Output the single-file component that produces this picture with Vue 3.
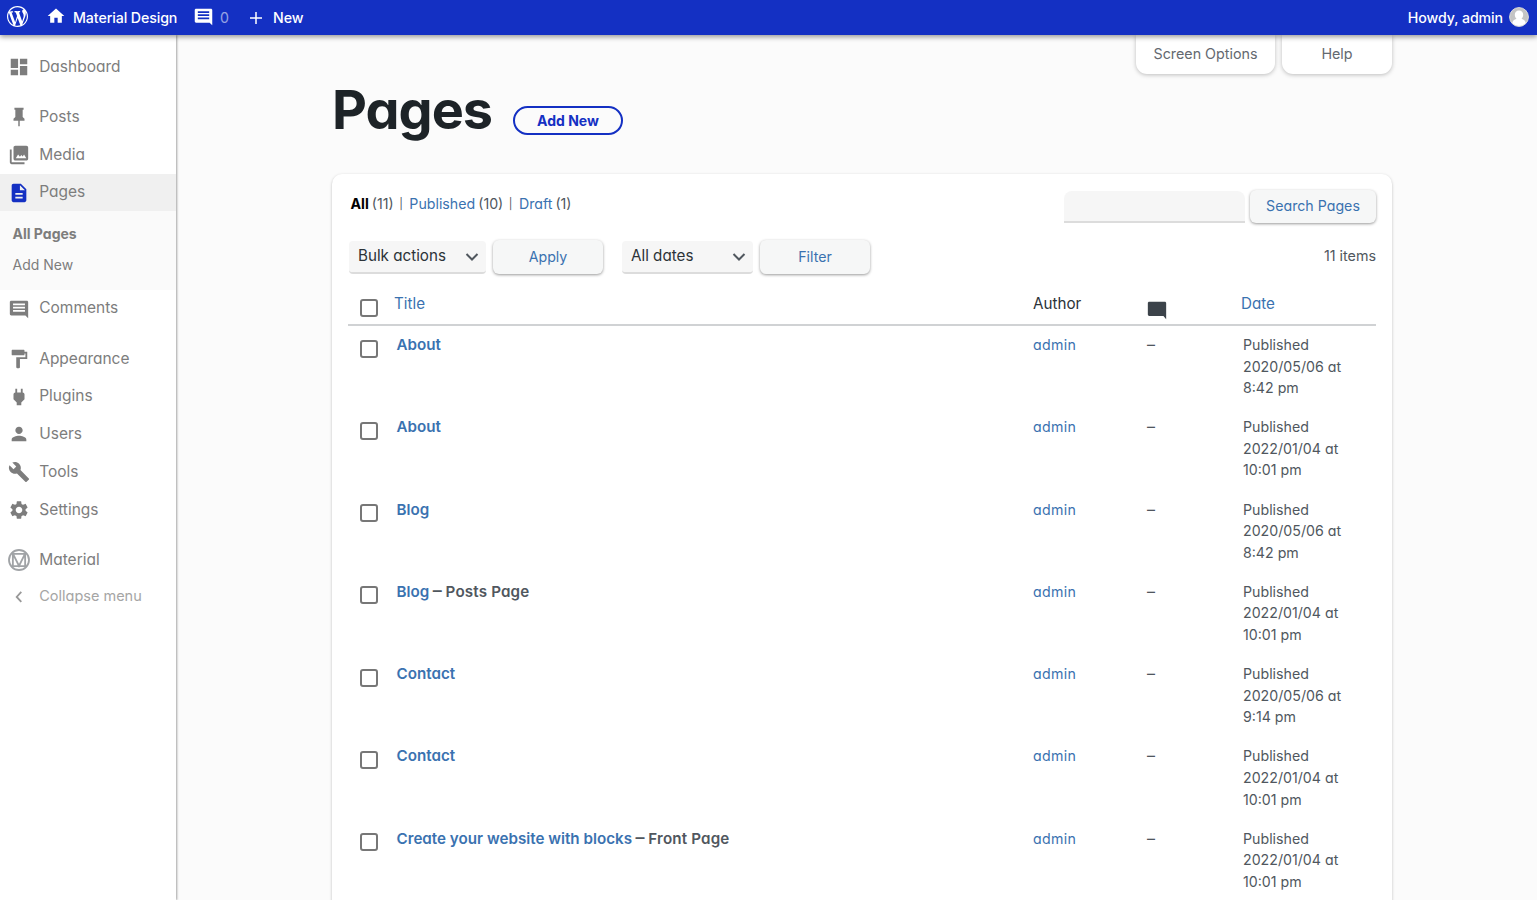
<template>
  <div class="admin">
    <header class="bar">
      <svg class="wp-logo" viewBox="0 0 20 20"><path :d="icons.wordpress" /></svg>
      <svg class="bar-home" viewBox="0 0 24 24"><path :d="icons.home" /></svg>
      <span class="bar-site">Material Design</span>
      <svg class="bar-comment" viewBox="0 0 24 24"><path :d="icons.comment" /></svg>
      <span class="bar-count">0</span>
      <svg class="bar-plus" viewBox="0 0 12 12"><path d="M6 0v12M0 6h12" /></svg>
      <span class="bar-new">New</span>
      <span class="howdy">Howdy, admin</span>
      <svg class="avatar" viewBox="0 0 20 20">
        <circle cx="10" cy="10" r="9.5" fill="#c4c4c4" />
        <path d="M10 3.6c2.6 0 4.2 1.8 4.2 4.2 0 1.700-.7 3-1.700 3.900 2.300.7 3.900 2.100 4.400 4.500A9.300 9.300 0 0 1 3.100 16.200c.5-2.400 2.100-3.800 4.400-4.500C6.500 10.800 5.800 9.500 5.800 7.800 5.800 5.400 7.400 3.600 10 3.600z" fill="#fff" />
        <circle cx="10" cy="10" r="9.400" fill="none" stroke="#d9d9d9" />
      </svg>
    </header>

    <div class="body">
      <nav class="menu">
        <template v-for="item in menu" :key="item.label">
          <div class="menu-item" :class="{ current: item.current, spaced: item.spaced }">
            <svg viewBox="0 0 24 24"><path :d="icons[item.icon]" /></svg>
            <span>{{ item.label }}</span>
          </div>
          <div v-if="item.current" class="submenu">
            <span class="active">All Pages</span>
            <span>Add New</span>
          </div>
        </template>
        <div class="menu-item spaced">
          <svg class="material" viewBox="0 0 24 24">
            <circle cx="12" cy="12" r="10.900" />
            <path d="M5.300 5.300h13.400v13.400H5.300zM5.600 5.600l6.400 12.800 6.400-12.800" />
          </svg>
          <span>Material</span>
        </div>
        <div class="menu-item collapse">
          <svg class="chevron" viewBox="0 0 24 24"><path d="M14.500 7.500L9.500 13l5 5.500" /></svg>
          <span>Collapse menu</span>
        </div>
      </nav>

      <main class="content">
        <div class="meta-links">
          <button class="screen-options">Screen Options</button>
          <button class="help">Help</button>
        </div>

        <div class="heading">
          <h1>Pages</h1>
          <a class="add-new">Add New</a>
        </div>

        <section class="card">
          <div class="top-row">
            <div class="views">
              <b>All</b> (11)<i>|</i><a>Published</a> (10)<i>|</i><a>Draft</a> (1)
            </div>
            <div class="search">
              <input type="text">
              <button class="btn">Search Pages</button>
            </div>
          </div>

          <div class="actions">
            <div class="select bulk">
              <span>Bulk actions</span>
              <svg viewBox="0 0 14 10"><path d="M1.500 2l5.500 5.500L12.500 2" /></svg>
            </div>
            <button class="btn wide">Apply</button>
            <div class="select dates">
              <span>All dates</span>
              <svg viewBox="0 0 14 10"><path d="M1.500 2l5.500 5.500L12.500 2" /></svg>
            </div>
            <button class="btn wide">Filter</button>
            <span class="total">11 items</span>
          </div>

          <div class="table-head">
            <span class="check"></span>
            <a class="title">Title</a>
            <span>Author</span>
            <svg viewBox="0 0 24 24"><path :d="icons.bubble" /></svg>
            <a>Date</a>
          </div>
          <div v-for="(page, i) in pages" :key="i" class="table-row">
            <span class="check"></span>
            <strong><a>{{ page.title }}</a><template v-if="page.state"><span class="dash">–</span> <span class="state">{{ page.state }}</span></template></strong>
            <a class="author">admin</a>
            <span class="dash">–</span>
            <div class="date">Published<br>{{ page.date }} at<br>{{ page.time }}</div>
          </div>
        </section>
      </main>
    </div>
  </div>
</template>

<script setup>
const icons = {
  wordpress: 'M20 10c0-5.510-4.490-10-10-10C4.480 0 0 4.490 0 10c0 5.520 4.480 10 10 10 5.510 0 10-4.480 10-10zM7.780 15.370L4.370 6.220c.55-.02 1.170-.08 1.170-.08.5-.06.44-1.130-.06-1.110 0 0-1.450.11-2.370.11-.18 0-.37 0-.58-.01C4.120 2.690 6.870 1.110 10 1.110c2.330 0 4.450.87 6.050 2.340-.68-.11-1.650.39-1.650 1.580 0 .74.45 1.360.9 2.100.35.61.55 1.360.55 2.460 0 1.490-1.400 5-1.400 5l-3.030-8.370c.54-.02.82-.17.82-.17.5-.05.44-1.250-.06-1.220 0 0-1.440.12-2.380.12-.87 0-2.330-.12-2.330-.12-.5-.03-.56 1.200-.06 1.220l.92.08 1.260 3.410zM17.410 10c.24-.64.74-1.870.43-4.250.7 1.290 1.050 2.710 1.050 4.250 0 3.290-1.730 6.240-4.400 7.780.97-2.590 1.940-5.200 2.920-7.780zM6.100 18.090C3.120 16.650 1.110 13.530 1.110 10c0-1.300.23-2.480.72-3.590C3.250 10.300 4.670 14.200 6.100 18.090zm4.030-6.630l2.580 6.980c-.86.29-1.760.45-2.710.45-.79 0-1.570-.11-2.290-.33.81-2.380 1.620-4.740 2.420-7.100z',
  home: 'M10 20v-6h4v6h5v-8h3L12 3 2 12h3v8z',
  comment: 'M3.500 3h17c.8 0 1.500.7 1.500 1.500V22l-3-3H3.500C2.700 19 2 18.300 2 17.500v-13C2 3.700 2.700 3 3.500 3zM5.500 6v2h13V6zm0 3.500v2h13v-2zm0 3.500v2h13v-2z',
  bubble: 'M3.500 3h17c.8 0 1.500.7 1.500 1.500V22l-3-3.500H3.500C2.700 18.500 2 17.800 2 17V4.500C2 3.700 2.700 3 3.500 3z',
  dashboard: 'M3 13h8V3H3v10zm0 8h8v-6H3v6zm10 0h8V11h-8v10zm0-18v6h8V3h-8z',
  pin: 'M16 12V4h1V2H7v2h1v8l-2 2v2h5.200v6h1.600v-6H18v-2l-2-2z',
  media: 'M22 16V4c0-1.100-.9-2-2-2H8c-1.100 0-2 .9-2 2v12c0 1.100.9 2 2 2h12c1.100 0 2-.9 2-2zm-13.500-.5l2.500-4 2 2.500 1.500-2 1.500 1.500 1.500-2 2.500 4zM2 6v14c0 1.100.9 2 2 2h14v-2H4V6H2z',
  page: 'M14 2H6c-1.100 0-1.990.9-1.990 2L4 20c0 1.100.89 2 1.990 2H18c1.100 0 2-.9 2-2V8l-6-6zm2 16H8v-2h8v2zm0-4H8v-2h8v2zm-3-5V3.500L18.500 9H13z',
  appearance: 'M18 4V3c0-.55-.45-1-1-1H5c-.55 0-1 .45-1 1v4c0 .55.45 1 1 1h12c.55 0 1-.45 1-1V6h1v4H9v11c0 .55.45 1 1 1h2c.55 0 1-.45 1-1v-9h8V4h-3z',
  plugin: 'M16.010 7L16 3h-2v4h-4V3H8v4h-.01C7 6.990 6 7.990 6 8.990v5.490L9.500 18v3h5v-3l3.500-3.510v-5.500c0-1-1-2-1.990-1.990z',
  user: 'M12 12c2.210 0 4-1.790 4-4s-1.790-4-4-4-4 1.790-4 4 1.790 4 4 4zm0 2c-2.670 0-8 1.340-8 4v2h16v-2c0-2.660-5.330-4-8-4z',
  tool: 'M22.700 19l-9.100-9.100c.9-2.300.4-5-1.500-6.900-2-2-5-2.400-7.400-1.300L9 6 6 9 1.600 4.700C.4 7.100.9 10.100 2.900 12.100c1.900 1.900 4.600 2.400 6.900 1.500l9.100 9.100c.4.4 1 .4 1.400 0l2.300-2.300c.5-.4.5-1.100.1-1.400z',
  settings: 'M19.140 12.940c.04-.3.06-.61.06-.94 0-.32-.02-.64-.07-.94l2.030-1.580c.18-.14.23-.41.12-.61l-1.920-3.320c-.12-.22-.37-.29-.59-.22l-2.390.96c-.5-.38-1.030-.7-1.620-.94l-.36-2.540c-.04-.24-.24-.41-.48-.41h-3.840c-.24 0-.43.17-.47.41l-.36 2.540c-.59.24-1.130.57-1.620.94l-2.390-.96c-.22-.08-.47 0-.59.22L2.740 8.870c-.12.21-.08.47.12.61l2.030 1.580c-.05.3-.09.63-.09.94s.02.64.07.94l-2.030 1.580c-.18.14-.23.41-.12.61l1.920 3.320c.12.22.37.29.59.22l2.390-.96c.5.38 1.030.7 1.620.94l.36 2.540c.05.24.24.41.48.41h3.840c.24 0 .44-.17.47-.41l.36-2.540c.59-.24 1.130-.56 1.620-.94l2.390.96c.22.08.47 0 .59-.22l1.920-3.320c.12-.22.07-.47-.12-.61l-2.010-1.580zM12 15.600c-1.980 0-3.600-1.620-3.600-3.600s1.620-3.600 3.600-3.600 3.600 1.620 3.600 3.600-1.620 3.600-3.600 3.600z'
}

const menu = [
  { label: 'Dashboard', icon: 'dashboard' },
  { label: 'Posts', icon: 'pin', spaced: true },
  { label: 'Media', icon: 'media' },
  { label: 'Pages', icon: 'page', current: true },
  { label: 'Comments', icon: 'comment' },
  { label: 'Appearance', icon: 'appearance', spaced: true },
  { label: 'Plugins', icon: 'plugin' },
  { label: 'Users', icon: 'user' },
  { label: 'Tools', icon: 'tool' },
  { label: 'Settings', icon: 'settings' }
]

const pages = [
  { title: 'About', date: '2020/05/06', time: '8:42 pm' },
  { title: 'About', date: '2022/01/04', time: '10:01 pm' },
  { title: 'Blog', date: '2020/05/06', time: '8:42 pm' },
  { title: 'Blog', state: 'Posts Page', date: '2022/01/04', time: '10:01 pm' },
  { title: 'Contact', date: '2020/05/06', time: '9:14 pm' },
  { title: 'Contact', date: '2022/01/04', time: '10:01 pm' },
  { title: 'Create your website with blocks', state: 'Front Page', date: '2022/01/04', time: '10:01 pm' }
]
</script>

<style>
body {
  margin: 0;
  overflow: hidden;
}
</style>

<style scoped>
* {
  box-sizing: border-box;
}

.admin {
  height: 100vh;
  display: flex;
  flex-direction: column;
  overflow: hidden;
  background: #fbfbfb;
  color: #50575e;
  font-family: 'Inter', 'Liberation Sans', sans-serif;
  font-size: 15px;
  font-feature-settings: 'cv11';
}

svg {
  flex: none;
  fill: currentColor;
}

a {
  color: #3a72b0;
}

button {
  font: inherit;
  font-feature-settings: inherit;
  letter-spacing: inherit;
  border: 0;
  padding: 0;
}

.bar {
  position: relative;
  z-index: 2;
  flex: none;
  height: 35px;
  display: flex;
  align-items: center;
  padding: 0 8px 0 7px;
  background: #1430c3;
  color: #fff;
  box-shadow: 0 2px 5px rgba(0, 0, 0, 0.4);
  font-size: 14.2px;
  font-weight: 500;
  letter-spacing: -0.1px;
  font-feature-settings: normal;
}

.wp-logo {
  width: 21px;
  height: 21px;
  margin-top: -3px;
}

.bar-home {
  width: 20px;
  height: 20px;
  margin: -3px 7px 0 18px;
}

.bar-site {
  width: 105px;
  white-space: nowrap;
}

.bar-comment {
  width: 21px;
  height: 21px;
  margin: -2px 6px 0 15px;
}

.bar-count {
  width: 9px;
  opacity: 0.55;
  font-weight: 400;
}

.bar-plus {
  width: 12px;
  height: 12px;
  margin: 1px 11px 0 21px;
  stroke: #fff;
  stroke-width: 1.5;
}

.howdy {
  margin-left: auto;
  margin-right: 6px;
}

.avatar {
  width: 20px;
  height: 20px;
  margin-top: -1px;
}

.body {
  flex: 1;
  min-height: 0;
  display: flex;
}

.menu {
  flex: none;
  width: 176px;
  padding-top: 13px;
  background: #fff;
  box-shadow: 1px 0 2px rgba(0, 0, 0, 0.35);
  color: #7d7d7d;
  font-size: 15.5px;
}

.menu-item {
  height: 37.8px;
  display: flex;
  align-items: center;
  padding-left: 8.4px;
  gap: 8.8px;
}

.menu-item span {
  padding-bottom: 1.5px;
}

.menu-item svg {
  width: 22px;
  height: 22px;
}

.menu-item.spaced {
  margin-top: 12.3px;
}

.menu-item.current {
  background: #f0f0f0;
}

.menu-item.current svg {
  color: #1430c3;
}

.menu-item .material {
  fill: none;
  stroke: #a0a3a6;
  stroke-width: 2;
}

.menu-item.collapse {
  height: 35px;
  color: #a5a5a5;
  font-size: 14.5px;
}

.menu-item .chevron {
  fill: none;
  stroke: #999;
  stroke-width: 2;
}

.submenu {
  height: 78.3px;
  padding: 7px 0 0 12.5px;
  display: flex;
  flex-direction: column;
  background: #fafafa;
  font-size: 14px;
  line-height: 31px;
}

.submenu .active {
  font-weight: 700;
}

.content {
  flex: none;
  width: 1060px;
  margin-left: 156px;
}

.meta-links {
  display: flex;
  justify-content: flex-end;
  gap: 7px;
}

.meta-links button {
  height: 39px;
  padding-bottom: 2px;
  border-radius: 0 0 11px 11px;
  background: #fff;
  box-shadow: 0 1px 4px rgba(0, 0, 0, 0.25);
  color: #646970;
  font-size: 14.3px;
}

.screen-options {
  width: 139px;
}

.help {
  width: 110px;
}

.heading {
  height: 100px;
  display: flex;
  align-items: flex-start;
}

h1 {
  width: 181px;
  margin: 0;
  padding-top: 4px;
  font-size: 54px;
  line-height: 64px;
  font-weight: 700;
  letter-spacing: -1px;
  color: #1d2327;
}

.add-new {
  width: 110px;
  height: 29px;
  margin-top: 32px;
  border: 2px solid #1430c3;
  border-radius: 15px;
  color: #1430c3;
  font-size: 14px;
  font-weight: 700;
  line-height: 25px;
  text-align: center;
}

.card {
  height: 760px;
  padding: 16px 16px 0;
  border-radius: 10px;
  background: #fff;
  box-shadow: 0 1px 3px rgba(0, 0, 0, 0.25);
}

.top-row {
  height: 50px;
  display: flex;
  justify-content: space-between;
  align-items: flex-start;
}

.views {
  padding: 5px 0 0 2.5px;
  font-size: 14.2px;
  line-height: 18px;
  white-space: nowrap;
  word-spacing: -1px;
}

.views b {
  color: #000;
}

.views i {
  margin: 0 6.5px 0 5.5px;
  font-size: 11px;
  font-style: normal;
  vertical-align: 1px;
}

.search {
  display: flex;
  gap: 5px;
}

.search input {
  width: 181px;
  height: 32px;
  margin-top: 1px;
  border: 0;
  border-bottom: 2px solid #dcdcdc;
  border-radius: 8px 8px 0 0;
  background: #f6f6f6;
}

.btn {
  width: 126px;
  height: 33px;
  border-radius: 6px;
  background: #f6f7f7;
  box-shadow: 0 1px 3px rgba(0, 0, 0, 0.4);
  color: #3a72b0;
  font-size: 14.2px;
}

.search .btn {
  padding-bottom: 2px;
}

.btn.wide {
  width: 110px;
  height: 34px;
  padding-bottom: 2px;
  margin-left: 7px;
}

.actions {
  height: 46px;
  display: flex;
  align-items: flex-start;
  padding-left: 1px;
}

.select {
  height: 33px;
  margin-top: 1px;
  padding: 0 7px 2px 9px;
  display: flex;
  align-items: center;
  justify-content: space-between;
  border-bottom: 2px solid #dcdcdc;
  border-radius: 4px;
  background: #f6f6f6;
  color: #2c3338;
  font-size: 15.2px;
}

.select svg {
  width: 14px;
  height: 10px;
  margin-top: 3px;
  fill: none;
  stroke: #50575e;
  stroke-width: 2;
}

.bulk {
  width: 137px;
}

.dates {
  width: 131px;
  margin-left: 19px;
}

.total {
  margin: 7px 0 0 auto;
  font-size: 14.3px;
  line-height: 17px;
}

.table-head,
.table-row {
  display: grid;
  grid-template-columns: 48px 637px 114px 96px 1fr;
  align-items: start;
}

.table-head {
  height: 39.6px;
  border-bottom: 2px solid #d0d2d4;
  padding-top: 8.4px;
  line-height: 20px;
  color: #2c3338;
  font-size: 15.2px;
}

.table-head .title {
  margin-left: -2px;
}

.table-head a:last-child {
  margin-left: -2px;
}

.table-head svg {
  width: 22px;
  height: 22px;
  margin: 5px 0 0 -1.5px;
  color: #3c434a;
}

.check {
  width: 18px;
  height: 18px;
  margin: 5px 0 0 12px;
  border: 2px solid #777;
  border-radius: 3px;
}

.table-row {
  height: 82.3px;
  padding-top: 8.4px;
  font-size: 14.2px;
  line-height: 21.6px;
}

.table-row .check {
  margin-top: 5.6px;
}

.table-row .author {
  letter-spacing: 0.3px;
}

.table-row .dash {
  font-size: 16px;
}

.table-row strong {
  padding-left: 0.5px;
  font-size: 15.2px;
  font-weight: 600;
}

.table-row strong .dash {
  margin-left: 3.5px;
  font-size: 18px;
  font-weight: 500;
  line-height: 1;
}

.table-row .state {
  letter-spacing: 0.15px;
}
</style>
